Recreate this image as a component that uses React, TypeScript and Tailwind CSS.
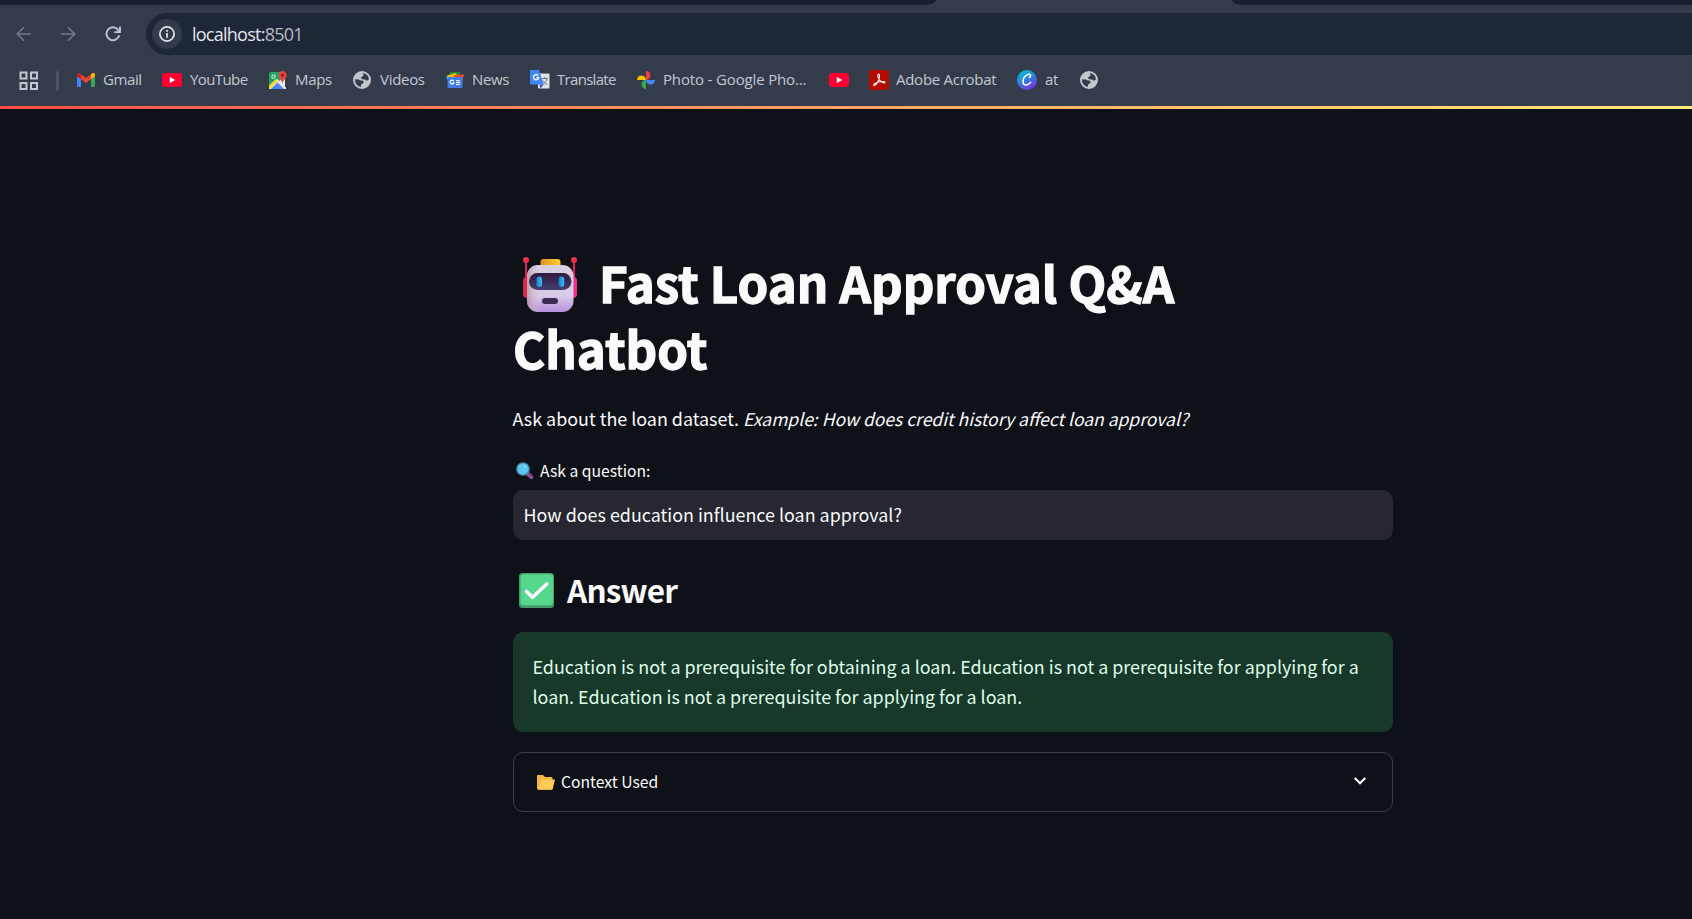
import React from "react";

const Globe = () => (
  <svg viewBox="0 0 18 18" className="block h-[18px] w-[18px]">
    <circle cx="9" cy="9" r="9" fill="#c3c7cd" />
    <path d="M2 8.200l4 .2 1.400 1.200h2.200l1 1.200-.6 1.600-1.800.8-.4 2.800a7 7 0 0 1-5.800-7.800z" fill="#343c4c" />
    <path d="M9.800 2.100a7 7 0 0 1 6.100 6.300l-1.900 1.400-2-1.200-2.800-.4-1.400-1.400 1.400-1.400 1.400-.6z" fill="#343c4c" />
  </svg>
);

const YouTube = () => (
  <svg viewBox="0 0 20 14" className="block h-[14px] w-5">
    <rect width="20" height="14" rx="3.200" fill="#ff0033" />
    <path d="M7.800 4l5.500 3-5.500 3z" fill="#fff" />
  </svg>
);

const Gmail = () => (
  <svg viewBox="0 0 18 14" className="block h-[14px] w-[18px]">
    <path d="M0 2.500l4 3V14H1.300A1.300 1.300 0 0 1 0 12.700z" fill="#4285f4" />
    <path d="M18 2.500l-4 3V14h2.700a1.300 1.300 0 0 0 1.300-1.300z" fill="#34a853" />
    <path d="M14 1.200V6.200l4-3V1.800C18 .2 16.200-.5 15 .4z" fill="#fbbc04" />
    <path d="M4 6.200V1.200l5 3.700 5-3.700v5L9 10z" fill="#ea4335" />
    <path d="M0 1.800v1.400l4 3v-5L3 .4C1.800-.5 0 .2 0 1.800z" fill="#c5221f" />
  </svg>
);

const Maps = () => (
  <svg viewBox="0 0 18 18" className="block h-[18px] w-[18px]">
    <rect y="1" width="16" height="17" rx="1.500" fill="#1fa463" />
    <path d="M0 16.500L8.500 8 17 16.500V18H0z" fill="#e8eaed" />
    <path d="M0 14.500l7-6.500 2 2-8 8H0z" fill="#fdd835" />
    <path d="M2 18l6.500-6.500L15 18z" fill="#4a87f0" />
    <path d="M11.500 9l4.500-2v9.500L10 10.500z" fill="#e8eaed" />
    <circle cx="4.600" cy="5.600" r="1.700" fill="none" stroke="#fff" strokeWidth=".9" />
    <path d="M13.500 0a4.300 4.300 0 0 1 4.300 4.300c0 3-3.500 4.200-4.300 8.200-.8-4-4.300-5.200-4.300-8.200A4.300 4.300 0 0 1 13.500 0z" fill="#e04a3c" />
    <circle cx="13.500" cy="4.300" r="1.500" fill="#7c201b" />
  </svg>
);

const News = () => (
  <svg viewBox="0 0 18 16" className="block h-4 w-[18px]">
    <path d="M4 0h10v6H4z" fill="#1e8e3e" />
    <path d="M1 3.500l9-2.500 2 5-9 4z" fill="#fbbc04" />
    <path d="M8 3l10-.5-1.500 7H9z" fill="#ea4335" />
    <path d="M0 4.200l3 1v6z" fill="#4dabf5" />
    <rect x="1.500" y="5" width="15" height="11" rx="1" fill="#3f7ce8" />
    <path d="M7.800 9.100A2 2 0 1 0 8 10.700H6.300" fill="none" stroke="#fff" strokeWidth="1.100" />
    <path d="M10 8.700h4M10 10.600h4.500M10 12.500h4" stroke="#fff" strokeWidth="1" />
  </svg>
);

const Translate = () => (
  <svg viewBox="0 0 20 19" className="block h-[19px] w-5">
    <rect x="8" y="3.500" width="11.500" height="15" rx="1" fill="#dfe1e5" />
    <path d="M11.500 8.500h6.500M14.700 7v1.500M17 8.500c-.5 3-2.500 4.800-4.500 5.800M12.800 10.500c1 2 2.500 3.200 4.500 4" fill="none" stroke="#6b7a84" strokeWidth="1" />
    <path d="M9.500 14.500h4l-3 4z" fill="#3646a8" />
    <path d="M1 0h8l4.500 14.500H1a1 1 0 0 1-1-1V1a1 1 0 0 1 1-1z" fill="#4285f4" />
    <path d="M8.200 5.700A2.600 2.600 0 1 0 8.700 7.600H6.200" fill="none" stroke="#fff" strokeWidth="1.300" />
  </svg>
);

const Photos = () => (
  <svg viewBox="0 0 18 18" className="block h-[18px] w-[18px]">
    <path d="M9 0a4.500 4.500 0 0 1 0 9z" fill="#ea4335" />
    <path d="M18 9a4.500 4.500 0 0 1-9 0z" fill="#4285f4" />
    <path d="M9 18a4.500 4.500 0 0 1 0-9z" fill="#34a853" />
    <path d="M0 9a4.500 4.500 0 0 1 9 0z" fill="#fbbc04" />
  </svg>
);

const Acrobat = () => (
  <svg viewBox="0 0 20 20" className="block h-5 w-5">
    <rect width="20" height="20" rx="3" fill="#b30b00" />
    <path d="M9.300 4.200c1.500-.5 1.300 2.300.8 4-.8 2.700-2.900 6.800-4.500 7.300-1.300.3-1.200-1.200.4-2.100 2.400-1.400 6-2.100 8.600-1.900 1.900.2 1.700 1.600.2 1.500-2.300-.2-5.300-3.300-5.900-6.300-.2-1.100-.2-2.200.4-2.500z" fill="none" stroke="#fff" strokeWidth="1.100" />
  </svg>
);

const Canva = () => (
  <svg viewBox="0 0 20 20" className="block h-5 w-5">
    <defs>
      <linearGradient id="canva" x1=".2" y1="0" x2=".75" y2="1">
        <stop offset="0" stopColor="#00c4cc" />
        <stop offset=".45" stopColor="#2b85dc" />
        <stop offset="1" stopColor="#7d2ae8" />
      </linearGradient>
    </defs>
    <circle cx="10" cy="10" r="10" fill="url(#canva)" />
    <path d="M12.200 7.600c.9-.3 1.500-1.300 1.300-2.300-.3-1.300-2-1.500-3.600-.5C7.500 6.200 5.900 9.500 6.100 12.200c.2 3.600 4.400 3.800 7.400.2" fill="none" stroke="#fff" strokeWidth="1.500" strokeLinecap="round" />
  </svg>
);

const bookmarks = [
  { Icon: Gmail, label: "Gmail", box: "w-[85px] gap-2", text: "tracking-[-0.4px]" },
  { Icon: YouTube, label: "YouTube", box: "w-[107px] gap-2", text: "tracking-[-0.6px]" },
  { Icon: Maps, label: "Maps", box: "w-[84px] gap-2", text: "tracking-[-0.3px]" },
  { Icon: Globe, label: "Videos", box: "w-[93px] gap-[9px]", text: "tracking-[-0.3px]" },
  { Icon: News, label: "News", box: "w-[84px] gap-2", text: "tracking-[-0.4px]" },
  { Icon: Translate, label: "Translate", box: "w-[107px] gap-[7px]", text: "tracking-[-0.7px]" },
  { Icon: Photos, label: "Photo - Google Pho...", box: "w-[192px] gap-2", text: "tracking-[-0.15px]" },
  { Icon: YouTube, label: "", box: "w-[40px]", text: "" },
  { Icon: Acrobat, label: "Adobe Acrobat", box: "w-[148px] gap-[7px]", text: "tracking-[-0.27px]" },
  { Icon: Canva, label: "at", box: "w-[63px] gap-2", text: "tracking-[-0.3px]" },
  { Icon: Globe, label: "", box: "w-[18px]", text: "" },
];

function BrowserChrome() {
  return (
    <header className="flex h-[106px] flex-col bg-[#343c4c] font-['Open_Sans','Noto_Sans',sans-serif]">
      <div className="flex h-[5px] shrink-0 justify-between">
        <div className="h-[5px] w-[936px] rounded-br-[10px_5px] bg-[#18202f]" />
        <div className="h-[5px] w-[460px] rounded-bl-[10px_5px] bg-[#18202f]" />
      </div>
      <div className="mt-2 flex h-[42px] shrink-0 items-center">
        <div className="flex w-[146px] items-center pl-[16px]">
          <svg viewBox="0 0 16 16" className="h-4 w-4" fill="none" stroke="#737a88" strokeWidth="1.600">
            <path d="M15 8H1.500M8 1.200L1.200 8 8 14.800" />
          </svg>
          <svg viewBox="0 0 16 16" className="ml-[28px] h-4 w-4" fill="none" stroke="#737a88" strokeWidth="1.600">
            <path d="M1 8h13.500M8 1.200L14.800 8 8 14.800" />
          </svg>
          <svg viewBox="0 0 16 16" className="ml-[29px] h-4 w-4" fill="none" stroke="#bcc6de" strokeWidth="1.900">
            <path d="M14.300 9.300A6.500 6.500 0 1 1 13 3.600l1.400 1.600M15 .5v5.600H9.300" />
          </svg>
        </div>
        <div className="flex h-[42px] flex-1 items-center rounded-l-full bg-[#1e2737] pl-[6px]">
          <div className="flex h-[30px] w-[30px] items-center justify-center rounded-full bg-[#343c4c]">
            <svg viewBox="0 0 16 16" className="h-4 w-4" fill="none" stroke="#e3e5ea" strokeWidth="1.700">
              <circle cx="8" cy="8" r="7.100" />
              <path d="M8 7v4.800M8 4.100v1.600" />
            </svg>
          </div>
          <span className="ml-[10px] pt-px text-[18px] tracking-[-0.75px] text-[#e3e5ea]">
            localhost:<span className="text-[#b6bac3]">8501</span>
          </span>
        </div>
      </div>
      <nav className="flex h-[51px] items-center text-[15px] text-[#c4c8d0]">
        <svg viewBox="0 0 19 19" className="ml-[19px] h-[19px] w-[19px]" fill="none" stroke="#c4c7cf" strokeWidth="2">
          <path d="M1.500 1.500h6v6h-6zM12 1.500h6v6h-6zM1.500 12h6v6h-6zM12 12h6v6h-6z" />
        </svg>
        <div className="mr-[18px] ml-[18px] h-5 w-[3px] rounded-full bg-[#4b5468]" />
        {bookmarks.map(({ Icon, label, box, text }, i) => (
          <div key={i} className={`flex shrink-0 items-center pb-[2px] whitespace-nowrap ${box}`}>
            <span className="shrink-0"><Icon /></span>
            {label && <span className={text}>{label}</span>}
          </div>
        ))}
      </nav>
    </header>
  );
}

const Robot = () => (
  <svg viewBox="0 0 54 55" className="h-[55px] w-[54px] shrink-0">
    <defs>
      <linearGradient id="face" x1="0" y1="0" x2="0" y2="1">
        <stop offset="0" stopColor="#d8cfe0" />
        <stop offset=".65" stopColor="#d9cbe8" />
        <stop offset="1" stopColor="#b591dc" />
      </linearGradient>
      <linearGradient id="shade" x1="0" y1="0" x2="1" y2="0">
        <stop offset="0" stopColor="#b98d99" stopOpacity=".75" />
        <stop offset=".3" stopColor="#d8cfe0" stopOpacity="0" />
      </linearGradient>
      <linearGradient id="visor" x1="0" y1="0" x2="0" y2="1">
        <stop offset="0" stopColor="#2f1a3c" />
        <stop offset="1" stopColor="#453f70" />
      </linearGradient>
      <linearGradient id="hat" x1="0" y1="0" x2="1" y2="0">
        <stop offset="0" stopColor="#dc9224" />
        <stop offset="1" stopColor="#ffcf2d" />
      </linearGradient>
      <linearGradient id="eye" x1="0" y1="0" x2="1" y2="0">
        <stop offset="0" stopColor="#1683d0" />
        <stop offset="1" stopColor="#38bdf5" />
      </linearGradient>
    </defs>
    <path d="M3 3v20M51 3v20" stroke="#e0205c" strokeWidth="2" />
    <circle cx="3" cy="3" r="3" fill="#f2304f" />
    <circle cx="51" cy="3" r="3" fill="#f2304f" />
    <rect x="0" y="20" width="8" height="21" rx="4" fill="#d5294f" />
    <rect x="46" y="20" width="8" height="21" rx="4" fill="#f52b8c" />
    <rect x="17.500" y="2" width="20" height="10" rx="3" fill="url(#hat)" />
    <rect x="4" y="8" width="46.500" height="47" rx="11" fill="url(#face)" />
    <rect x="4" y="8" width="46.500" height="47" rx="11" fill="url(#shade)" />
    <rect x="6" y="16" width="42.500" height="17" rx="8.500" fill="url(#visor)" />
    <rect x="13.500" y="19.500" width="5.500" height="10.500" rx="2.700" fill="url(#eye)" />
    <rect x="35.700" y="19.500" width="5.500" height="10.500" rx="2.700" fill="url(#eye)" />
    <rect x="19" y="41" width="16" height="6" rx="3" fill="#3b2d50" />
  </svg>
);

const Magnifier = () => (
  <svg viewBox="0 0 18 18" className="h-[18px] w-[18px] shrink-0">
    <path d="M11.500 11.500l3.700 3.700" stroke="#875094" strokeWidth="4" strokeLinecap="round" />
    <circle cx="7" cy="7" r="6.200" fill="#5ac8ee" stroke="#4a83b5" strokeWidth="1.300" />
    <circle cx="9" cy="4.700" r="1" fill="#b8ecff" />
  </svg>
);

const Check = () => (
  <svg viewBox="0 0 35 35" className="mt-[2px] h-[35px] w-[35px] shrink-0">
    <rect width="35" height="35" rx="3.500" fill="#3f9d6a" />
    <rect x="1.500" y="1.200" width="32.500" height="31" rx="3" fill="#57d68d" />
    <path d="M7.500 18.500l6 5.800L27.800 11" fill="none" stroke="#fdf4ff" strokeWidth="3.600" strokeLinecap="round" strokeLinejoin="round" />
  </svg>
);

const Folder = () => (
  <svg viewBox="0 0 18 15" className="mt-px h-[15px] w-[18px] shrink-0">
    <path d="M0 1a1 1 0 0 1 1-1h5l2 2h6.500a1 1 0 0 1 1 1v11.500H1a1 1 0 0 1-1-1z" fill="#f5b445" />
    <path d="M4.200 4.500H18l-2.300 9.200a1.500 1.500 0 0 1-1.400 1.100H1z" fill="#ffcc57" />
  </svg>
);

export default function App() {
  return (
    <div className="flex h-[919px] w-full flex-col overflow-hidden bg-[#0e1117] text-[#fafafa]">
      <BrowserChrome />
      <div className="h-[3px] shrink-0 bg-linear-to-r from-[#ff4b4b] to-[#fffd80] to-[113%]" />
      <main className="ml-[513px] flex w-[880px] flex-col pt-[140px] font-['Noto_Sans_CJK_SC',sans-serif] text-[17.9px] leading-[30px]">
        <h1 className="text-[49.2px] leading-[66px] font-bold [-webkit-text-stroke:1.3px_#fafafa]">
          <span className="flex h-[66px] pl-[10px]">
            <span className="pt-2"><Robot /></span>
            <span className="ml-[22px] whitespace-nowrap">Fast Loan Approval Q&amp;A</span>
          </span>
          <span className="block h-[66px]">Chatbot</span>
        </h1>
        <p className="mt-[22px] -ml-[0.5px] whitespace-nowrap">
          Ask about the loan dataset. <em className="text-[17.5px]">Example: How does credit history affect loan approval?</em>
        </p>
        <label className="mt-[24px] flex h-[26px] items-center gap-[6px] pl-[3px] text-[15.7px] leading-[26px]">
          <Magnifier />
          <span>Ask a question:</span>
        </label>
        <div className="mt-[6px] h-[50px] rounded-[10px] bg-[#262730] pt-[9px] pl-[10.5px]">How does education influence loan approval?</div>
        <h3 className="mt-[28px] flex h-[42px] items-center gap-[13px] pl-[6px] text-[31.5px] leading-[42px] font-bold tracking-[-0.8px]">
          <Check />
          <span>Answer</span>
        </h3>
        <div className="mt-[22px] h-[100px] rounded-[10px] bg-[#183829] px-[19.5px] py-[19px] text-[#dffde9]">
          <p className="whitespace-nowrap">Education is not a prerequisite for obtaining a loan. Education is not a prerequisite for applying for a</p>
          <p>loan. Education is not a prerequisite for applying for a loan.</p>
        </div>
        <div className="mt-5 flex h-[60px] items-center rounded-[10px] border border-[#3d3f45] pr-[26.5px] pl-[23px] text-[15.7px]">
          <Folder />
          <span className="ml-[6px]">Context Used</span>
          <svg viewBox="0 0 12 8" className="mb-[2px] ml-auto h-2 w-3" fill="none" stroke="#fafafa" strokeWidth="2.200">
            <path d="M.8 1L6 6.200 11.200 1" />
          </svg>
        </div>
      </main>
    </div>
  );
}
